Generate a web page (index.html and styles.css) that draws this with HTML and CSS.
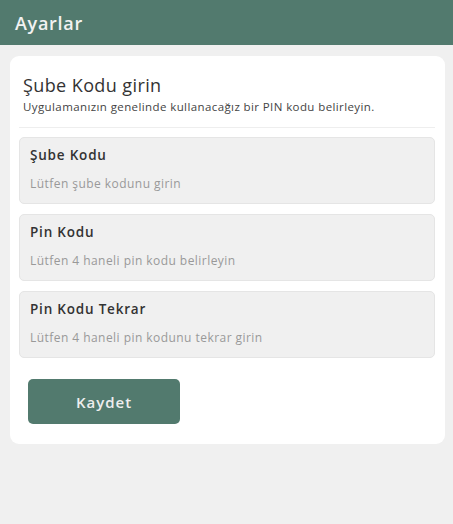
FILE: index.html
```html
<!DOCTYPE html>
<html lang="tr">
<head>
  <meta charset="UTF-8" />
  <meta name="viewport" content="width=device-width, initial-scale=1.0"/>
  <title>Ayarlar</title>
  <link rel="stylesheet" href="styles.css">
</head>
<body>

  <div class="navbar">
    <div class="title">Ayarlar</div>
  </div>

  <div class="card">
    <h2>Şube Kodu girin</h2>
    <p class="subtitle">Uygulamanızın genelinde kullanacağız bir PIN kodu belirleyin.</p>
    <hr class="divider" />

    <form class="form">
      <label class="field">
        <span class="field-label">Şube Kodu</span>
        <input type="text" placeholder="Lütfen şube kodunu girin" />
      </label>

      <label class="field">
        <span class="field-label">Pin Kodu</span>
        <input type="password" placeholder="Lütfen 4 haneli pin kodu belirleyin" />
      </label>

      <label class="field">
        <span class="field-label">Pin Kodu Tekrar</span>
        <input type="password" placeholder="Lütfen 4 haneli pin kodunu tekrar girin" />
      </label>

      <button type="button" class="btn">Kaydet</button>
    </form>
  </div>

</body>
</html>
```

FILE: styles.css
```css
body {
  font-family: 'Open Sans', 'Lato', sans-serif;
  margin: 0;
  background-color: #f0f0f0;
}

.navbar {
  background-color: #527a6e;
  height: 45px;
  padding: 0 15px;
  display: flex;
  align-items: center;
}

.navbar .title {
  color: #f2f2f2;
  font-size: 18px;
  font-weight: 600;
  letter-spacing: 0.7px;
}

.card {
  margin: 11px 8px 0 10px;
  background-color: white;
  border-radius: 9px;
  padding: 17px 10px 20px 9px;
}

h2 {
  margin: 0 0 0 4px;
  font-size: 18px;
  font-weight: 500;
  color: #333;
  line-height: 24px;
  letter-spacing: 0.4px;
}

.subtitle {
  margin: 2px 0 0 4px;
  font-size: 11.5px;
  color: #444;
  line-height: 16px;
  letter-spacing: 0.4px;
}

.divider {
  border: none;
  border-top: 1px solid #eee;
  margin: 12px 0 9px;
}

.form {
  display: flex;
  flex-direction: column;
  gap: 10px;
}

.field {
  display: flex;
  flex-direction: column;
  height: 67px;
  box-sizing: border-box;
  padding: 8px 10px 0;
  background-color: #f0f0f0;
  border: 1px solid #e5e5e5;
  border-radius: 5px;
}

.field-label {
  font-size: 13.5px;
  font-weight: 600;
  color: #333;
  line-height: 19px;
  letter-spacing: 0.8px;
}

.field input {
  margin-top: 10px;
  padding: 0;
  border: none;
  background: transparent;
  font-family: inherit;
  font-size: 12px;
  color: #333;
  letter-spacing: 0.45px;
  outline: none;
}

.field input::placeholder {
  color: #999;
}

.btn {
  align-self: flex-start;
  margin: 11px 0 0 9px;
  width: 152px;
  height: 45px;
  border: none;
  border-radius: 5px;
  background-color: #527a6e;
  color: #eeeeee;
  font-family: inherit;
  font-size: 15px;
  font-weight: 600;
  letter-spacing: 1px;
  cursor: pointer;
}
```
